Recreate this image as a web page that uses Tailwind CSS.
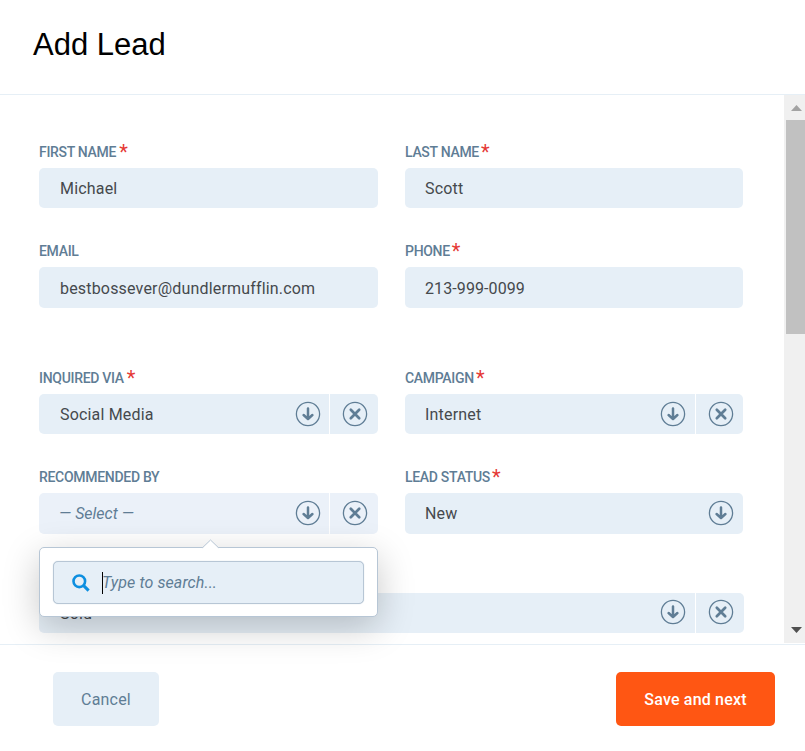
<!DOCTYPE html>
<html lang="en">
<head>
<meta charset="utf-8">
<title>Add Lead</title>
<script src="https://cdn.jsdelivr.net/npm/@tailwindcss/browser@4"></script>
</head>
<body class="bg-white">
<svg class="hidden">
  <symbol id="down" viewBox="0 0 26 26" fill="none" stroke="#5f7d95">
    <circle cx="13" cy="13" r="11.6" stroke-width="1.3"/>
    <path d="M13 7.4V17.6M8.6 14l4.4 4 4.4-4" stroke-width="2.5" stroke-linecap="round" stroke-linejoin="round"/>
  </symbol>
  <symbol id="clear" viewBox="0 0 26 26" fill="none" stroke="#5f7d95">
    <circle cx="13" cy="13" r="11.6" stroke-width="1.3"/>
    <path d="M8.8 8.8l8.4 8.4M17.2 8.8l-8.4 8.4" stroke-width="2.7" stroke-linecap="round"/>
  </symbol>
</svg>
<div class="flex h-[751px] w-[805px] flex-col overflow-hidden bg-white font-['Roboto',sans-serif] text-[16px] tracking-[0.18px] text-[#45494d]">
  <header class="h-[95px] shrink-0 border-b border-[#e6eff6] pt-[24px] pl-[33px]">
    <h1 class="font-['Liberation_Sans',sans-serif] text-[31px] leading-[41px] tracking-[0px] text-black">Add Lead</h1>
  </header>

  <div class="flex h-[549px] shrink-0">
    <main class="w-[784px] pt-[49px] pl-[39px]">
      <div class="grid w-[704px] grid-cols-[339px_338px] gap-x-[27px]">
        <div class="h-[99px]">
          <div class="flex h-[24px] text-[14px] leading-[16px] font-medium tracking-[-0.3px] text-[#5f7d95]">FIRST NAME<span class="ml-[3px] text-[20px] leading-[16px] font-normal text-[#e53935]">*</span></div>
          <div class="flex h-[40px] items-center rounded-[5px] bg-[#e6eff7] pt-px pl-[21px]">Michael</div>
        </div>
        <div class="h-[99px]">
          <div class="flex h-[24px] text-[14px] leading-[16px] font-medium tracking-[-0.3px] text-[#5f7d95]">LAST NAME<span class="ml-[2px] text-[20px] leading-[16px] font-normal text-[#e53935]">*</span></div>
          <div class="flex h-[40px] items-center rounded-[5px] bg-[#e6eff7] pt-px pl-[20px]">Scott</div>
        </div>
        <div class="h-[127px]">
          <div class="flex h-[24px] text-[14px] leading-[16px] font-medium tracking-[-0.3px] text-[#5f7d95]">EMAIL</div>
          <div class="flex h-[41px] items-center rounded-[5px] bg-[#e6eff7] pt-[2px] pl-[21px]">bestbossever@dundlermufflin.com</div>
        </div>
        <div class="h-[127px]">
          <div class="flex h-[24px] text-[14px] leading-[16px] font-medium tracking-[-0.3px] text-[#5f7d95]">PHONE<span class="ml-[2px] text-[20px] leading-[16px] font-normal text-[#e53935]">*</span></div>
          <div class="flex h-[41px] items-center rounded-[5px] bg-[#e6eff7] pt-[2px] pl-[20px] tracking-[0.1px]">213-999-0099</div>
        </div>
        <div class="h-[99px]">
          <div class="flex h-[24px] text-[14px] leading-[16px] font-medium tracking-[-0.3px] text-[#5f7d95]">INQUIRED VIA<span class="ml-[3px] text-[20px] leading-[16px] font-normal text-[#e53935]">*</span></div>
          <div class="flex h-[40px] overflow-hidden rounded-[5px] bg-[#e6eff7]">
            <div class="flex flex-1 items-center justify-between pr-[8px] pl-[21px]"><span class="pt-[2px]">Social Media</span><svg class="size-[26px]"><use href="#down"/></svg></div>
            <div class="flex w-[49px] items-center border-l border-white pl-[12px]"><svg class="size-[26px]"><use href="#clear"/></svg></div>
          </div>
        </div>
        <div class="h-[99px]">
          <div class="flex h-[24px] text-[14px] leading-[16px] font-medium tracking-[-0.3px] text-[#5f7d95]">CAMPAIGN<span class="ml-[2px] text-[20px] leading-[16px] font-normal text-[#e53935]">*</span></div>
          <div class="flex h-[40px] overflow-hidden rounded-[5px] bg-[#e6eff7]">
            <div class="flex flex-1 items-center justify-between pr-[9px] pl-[20px]"><span class="pt-[2px]">Internet</span><svg class="size-[26px]"><use href="#down"/></svg></div>
            <div class="flex w-[48px] items-center border-l border-white pl-[12px]"><svg class="size-[26px]"><use href="#clear"/></svg></div>
          </div>
        </div>
        <div class="relative h-[100px]">
          <div class="flex h-[24px] text-[14px] leading-[16px] font-medium tracking-[-0.3px] text-[#5f7d95]">RECOMMENDED BY</div>
          <div class="flex h-[41px] overflow-hidden rounded-[5px] bg-[#ebf1f9]">
            <div class="flex flex-1 items-center justify-between pr-[8px] pl-[20px] tracking-normal text-[#5f7d95]"><i>— Select —</i><svg class="mb-px size-[26px]"><use href="#down"/></svg></div>
            <div class="flex w-[49px] items-center border-l border-white pl-[12px]"><svg class="mb-px size-[26px]"><use href="#clear"/></svg></div>
          </div>
          <div class="absolute top-[78px] left-0 z-10 h-[70px] w-[339px] rounded-[5px] border border-[#b7c6d5] bg-white p-[13px] shadow-[0_10px_36px_rgba(0,0,0,0.22)]">
            <svg class="absolute -top-[9px] left-[162px] h-[10px] w-[17px]" viewBox="0 0 17 10"><path d="M0 9.5L8.5 1L17 9.5V10H0z" fill="#fff"/><path d="M0.5 8.7L8.5 1L16.5 8.7" fill="none" stroke="#b7c6d5"/></svg>
            <div class="flex h-[43px] w-[311px] items-center rounded-[5px] border border-[#b7c6d5] bg-[#e6eff7] pl-[18px] shadow-[0_0_1px_#b7c6d5]">
              <svg class="size-[18px]" viewBox="0 0 18 18" fill="none" stroke="#0d8fe0"><circle cx="7.3" cy="7.3" r="5.8" stroke-width="2.6"/><path d="M11.6 11.6l5 5" stroke-width="3"/></svg>
              <span class="ml-[12px] h-[22px] w-px bg-black"></span>
              <i class="-ml-px tracking-[0.1px] text-[#5f7d95]">Type to search...</i>
            </div>
          </div>
        </div>
        <div class="h-[100px]">
          <div class="flex h-[24px] text-[14px] leading-[16px] font-medium tracking-[-0.3px] text-[#5f7d95]">LEAD STATUS<span class="ml-[2px] text-[20px] leading-[16px] font-normal text-[#e53935]">*</span></div>
          <div class="flex h-[41px] items-center justify-between rounded-[5px] bg-[#e6eff7] pr-[9px] pl-[20px]">New<svg class="mb-px size-[26px]"><use href="#down"/></svg></div>
        </div>
      </div>
      <div class="mt-[24px] flex h-[40px] w-[705px] overflow-hidden rounded-[5px] bg-[#e6eff7]">
        <div class="flex flex-1 items-center justify-between pr-[9px] pl-[21px]"><span class="pt-[2px]">Sold</span><svg class="mb-[2px] size-[26px]"><use href="#down"/></svg></div>
        <div class="flex w-[49px] items-center border-l border-white pl-[12px]"><svg class="mb-[2px] size-[26px]"><use href="#clear"/></svg></div>
      </div>
    </main>
    <div class="flex h-[548px] w-[21px] flex-col justify-between bg-[#f0f0f0] pl-[2px]">
      <div>
        <svg class="mt-[10px] ml-[5px] block h-[6px] w-[11px]" viewBox="0 0 11 6"><path d="M5.5 0L11 6H0z" fill="#a3a3a3"/></svg>
        <div class="mt-[9px] h-[214px] w-[19px] bg-[#c1c1c1]"></div>
      </div>
      <svg class="mb-[10px] ml-[5px] block h-[6px] w-[11px]" viewBox="0 0 11 6"><path d="M0 0H11L5.5 6z" fill="#505050"/></svg>
    </div>
  </div>

  <footer class="flex h-[107px] shrink-0 items-start justify-between border-t border-[#e6eff6] pt-[27px] pr-[30px] pl-[53px]">
    <button class="h-[54px] w-[106px] rounded-[5px] bg-[#e6eff7] pt-[2px] text-[#5f7d95]">Cancel</button>
    <button class="h-[54px] w-[159px] rounded-[5px] bg-[#ff5613] pt-[2px] font-medium text-white">Save and next</button>
  </footer>
</div>
</body>
</html>
